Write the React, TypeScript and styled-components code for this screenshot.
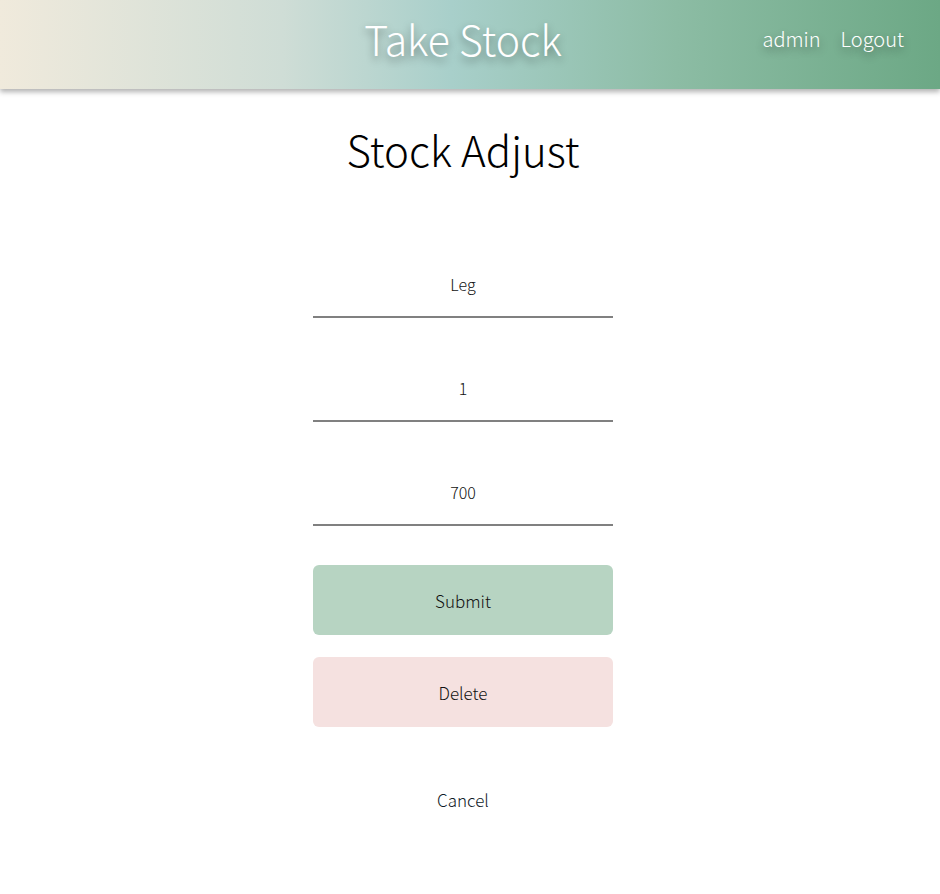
import React from "react";
import styled, { createGlobalStyle } from "styled-components";

const GlobalStyle = createGlobalStyle`
  html, body { margin: 0; padding: 0; background: #ffffff; }
  body { font-family: "Noto Sans CJK KR", "Noto Sans", sans-serif; font-weight: 300; color: #111; }
  * { box-sizing: border-box; }
`;

const Header = styled.header`
  height: 89px;
  display: grid;
  grid-template-columns: 1fr auto 1fr;
  align-items: center;
  padding: 0 14px 14px 0;
  background: linear-gradient(90deg, #f0eadc 0%, #cfddd6 30%, #a8cfca 48%, #8cbca4 72%, #6ca885 100%);
  box-shadow: 0 3px 5px rgba(0, 0, 0, 0.3);
  position: relative;
  z-index: 1;
`;

const Title = styled.h1`
  grid-column: 2;
  margin: 0;
  font-size: 41px;
  font-weight: 300;
  color: #ffffff;
  text-shadow: 0 4px 8px rgba(0, 0, 0, 0.4);
`;

const Nav = styled.nav`
  grid-column: 3;
  justify-self: end;
  display: flex;
  gap: 20px;
  padding-right: 22px;
  margin-top: 2px;
`;

const NavLink = styled.a`
  color: #ffffff;
  font-size: 20px;
  font-weight: 300;
  text-decoration: none;
  text-shadow: 0 4px 8px rgba(0, 0, 0, 0.4);
`;

const Main = styled.main`
  display: flex;
  flex-direction: column;
  align-items: center;
  padding-right: 14px;
`;

const Heading = styled.h2`
  margin: 35px 0 0;
  font-size: 42px;
  font-weight: 300;
  color: #000;
  line-height: 1.2;
`;

const Form = styled.form`
  width: 300px;
  display: flex;
  flex-direction: column;
  margin-top: 78px;
`;

const Field = styled.input`
  width: 100%;
  height: 66px;
  margin-top: 38px;
  border: none;
  border-bottom: 2px solid #808080;
  background: transparent;
  text-align: center;
  font-family: inherit;
  font-weight: 300;
  font-size: 16px;
  color: #111;
  outline: none;
  &:first-child { margin-top: 0; }
`;

const Button = styled.button<{ $bg: string; $mt: number }>`
  width: 100%;
  height: 70px;
  margin-top: ${(p) => p.$mt}px;
  border: none;
  border-radius: 6px;
  background: ${(p) => p.$bg};
  font-family: inherit;
  font-weight: 300;
  font-size: 17px;
  color: #111;
  cursor: pointer;
`;

const Cancel = styled.a`
  margin-top: 60px;
  font-size: 17px;
  font-weight: 300;
  color: #0f1a26;
  text-decoration: none;
  text-align: center;
`;

export default function App() {
  return (
    <>
      <GlobalStyle />
      <Header>
        <Title>Take Stock</Title>
        <Nav>
          <NavLink href="#">admin</NavLink>
          <NavLink href="#">Logout</NavLink>
        </Nav>
      </Header>
      <Main>
        <Heading>Stock Adjust</Heading>
        <Form onSubmit={(e) => e.preventDefault()}>
          <Field defaultValue="Leg" />
          <Field defaultValue="1" />
          <Field defaultValue="700" />
          <Button type="submit" $bg="#b7d4c2" $mt={39}>Submit</Button>
          <Button type="button" $bg="#f5e1e0" $mt={22}>Delete</Button>
          <Cancel href="#">Cancel</Cancel>
        </Form>
      </Main>
    </>
  );
}
